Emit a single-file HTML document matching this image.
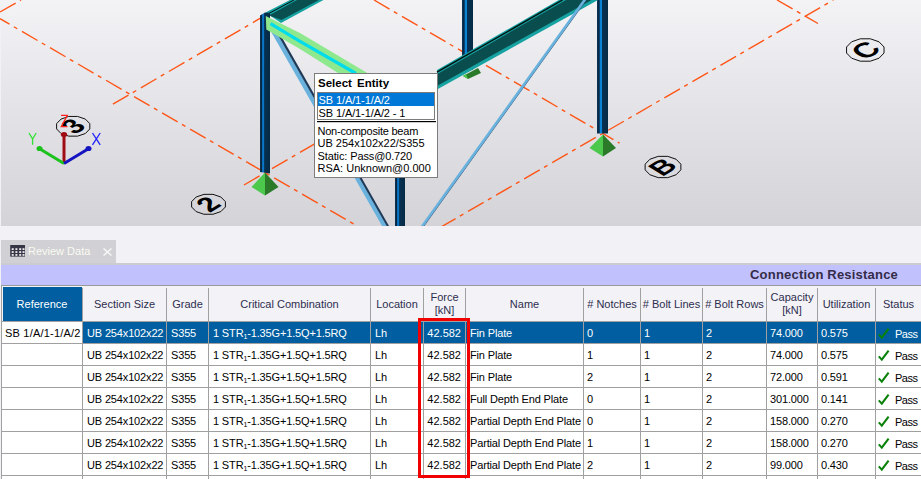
<!DOCTYPE html>
<html><head><meta charset="utf-8"><style>
*{margin:0;padding:0;box-sizing:border-box}
html,body{width:921px;height:479px;overflow:hidden;background:#f1f1f6;font-family:"Liberation Sans", sans-serif;}
.a{position:absolute}
.t{position:absolute;white-space:nowrap;font-size:11px;line-height:13px}
.hd{position:absolute;white-space:nowrap;font-size:11px;line-height:13px;color:#2e2e4e;text-align:center}
</style></head><body>
<div class="a" style="left:1px;top:0;width:920px;height:226px;background:linear-gradient(#f3f3f6,#d3d3d8)"></div><svg class="a" style="left:0;top:0" width="921" height="226" viewBox="0 0 921 226"><defs><linearGradient id="colA" x1="0" x2="1" y1="0" y2="0"><stop offset="0" stop-color="#0e3658"/><stop offset="0.16" stop-color="#06243f"/><stop offset="0.24" stop-color="#0a6cb8"/><stop offset="0.36" stop-color="#0a78c6"/><stop offset="0.46" stop-color="#073152"/><stop offset="1" stop-color="#052a44"/></linearGradient><linearGradient id="colB" x1="0" x2="1" y1="0" y2="0"><stop offset="0" stop-color="#0e3658"/><stop offset="0.2" stop-color="#06243f"/><stop offset="0.28" stop-color="#0a80d0"/><stop offset="0.42" stop-color="#0a84d4"/><stop offset="0.5" stop-color="#073152"/><stop offset="1" stop-color="#052a44"/></linearGradient></defs><g stroke="#ff5516" stroke-width="1.4" stroke-dasharray="18 5 4 5.4" fill="none"><line x1="0" y1="18.7" x2="357" y2="226" stroke-dashoffset="7"/><line x1="112.9" y1="104.1" x2="291.6" y2="0"/><line x1="0" y1="12" x2="21" y2="0"/><line x1="244" y1="185" x2="316" y2="143"/><line x1="374" y1="0" x2="619.5" y2="143.2"/><line x1="440" y1="227.6" x2="833.4" y2="0"/><line x1="777" y1="0" x2="818" y2="23.5"/></g><polygon points="265.5,12.5 290,0 323.5,0 281,23" fill="#17a2a2"/><polygon points="269,15.5 297,0 319,0 281.5,20" fill="#0a4f50"/><line x1="267.5" y1="14.2" x2="294" y2="0" stroke="#041010" stroke-width="1"/><rect x="462" y="0" width="11" height="70" fill="url(#colB)"/><rect x="597" y="0" width="11" height="133.5" fill="url(#colB)"/><polygon points="463,76 478,68 481,73 468,79" fill="#2a7a2a"/><polygon points="463,76 466,74 468,79" fill="#4cc94c"/><polygon points="437,70 558.8,0 598,0 437,89.5" fill="#17a2a2"/><polygon points="437,74.2 566,0 591.5,0 437,86" fill="#0a4d4e"/><line x1="437" y1="72.2" x2="562.5" y2="0" stroke="#041010" stroke-width="1.4"/><line x1="588.3" y1="-4" x2="420.3" y2="230" stroke="#2a4a6c" stroke-width="2"/><line x1="587.5" y1="-4" x2="419.5" y2="230" stroke="#6ab2de" stroke-width="2.6"/><rect x="395" y="150" width="10" height="80" fill="url(#colA)"/><polygon points="264.4,20 269.6,20 386.9,226 382.1,226" fill="#6ab2de"/><polygon points="269.4,20 272,20 389,226 386.7,226" fill="#1e3a58"/><polygon points="260,15.5 265,12.5 270,13 270,173.5 260,172" fill="url(#colA)"/><polygon points="265.8,16 300,33 368.2,73.5 338.8,73.5 300,49 266.3,29.6" fill="#8ee88e"/><polyline points="270.5,23.6 300,41.3 356,73.5" fill="none" stroke="#00dcec" stroke-width="3.2"/><polygon points="265,172.5 251.5,187 265,195.5" fill="#4cc94c"/><polygon points="265,172.5 278.5,187 265,195.5" fill="#2a7a2a"/><polygon points="603,134.5 589.5,148 603,156.5" fill="#4cc94c"/><polygon points="603,134.5 616,148 603,156.5" fill="#2a7a2a"/><polygon points="89.81,128.94 85.36,133.51 77.65,136.15 68.75,136.15 61.04,133.51 56.59,128.94 56.59,123.66 61.04,119.09 68.75,116.45 77.65,116.45 85.36,119.09 89.81,123.66" fill="none" stroke="#111" stroke-width="1"/><text transform="matrix(1.0,-0.62,1.0,0.62,73.2,126.3)" font-family="Liberation Sans" font-weight="bold" font-size="23" text-anchor="middle" dominant-baseline="central" fill="#000">3</text><polygon points="225.40,206.97 220.87,211.58 213.03,214.25 203.97,214.25 196.13,211.58 191.60,206.97 191.60,201.63 196.13,197.02 203.97,194.35 213.03,194.35 220.87,197.02 225.40,201.63" fill="none" stroke="#111" stroke-width="1"/><text transform="matrix(1.0,-0.62,1.0,0.62,208.5,204.3)" font-family="Liberation Sans" font-weight="bold" font-size="23" text-anchor="middle" dominant-baseline="central" fill="#000">2</text><polygon points="680.87,169.85 676.08,174.78 667.79,177.63 658.21,177.63 649.92,174.78 645.13,169.85 645.13,164.15 649.92,159.22 658.21,156.37 667.79,156.37 676.08,159.22 680.87,164.15" fill="none" stroke="#111" stroke-width="1"/><text transform="matrix(1.0,-0.62,1.0,0.62,663,167)" font-family="Liberation Sans" font-weight="bold" font-size="23" text-anchor="middle" dominant-baseline="central" fill="#000">B</text><polygon points="884.04,53.00 879.02,58.20 870.32,61.20 860.28,61.20 851.58,58.20 846.56,53.00 846.56,47.00 851.58,41.80 860.28,38.80 870.32,38.80 879.02,41.80 884.04,47.00" fill="none" stroke="#111" stroke-width="1"/><text transform="matrix(1.0,-0.62,1.0,0.62,865.3,50)" font-family="Liberation Sans" font-weight="bold" font-size="24" text-anchor="middle" dominant-baseline="central" fill="#000">C</text><g stroke-width="3" stroke-linecap="butt"><line x1="64" y1="163.5" x2="64" y2="135" stroke="#a00c14"/><line x1="64" y1="163.5" x2="40" y2="149" stroke="#1cc21c"/><line x1="64" y1="163.5" x2="88" y2="149" stroke="#1414c0"/></g><ellipse cx="64" cy="134.5" rx="3.2" ry="2.5" fill="#a00c14"/><ellipse cx="39.5" cy="148.5" rx="3" ry="2.6" fill="#1cc21c"/><ellipse cx="88.5" cy="148.5" rx="3" ry="2.6" fill="#1414c0"/><path d="M61,115.3 H67.3 L61.3,126.6 H67.5" fill="none" stroke="#ff2020" stroke-width="1.3"/><path d="M29,133 L32.6,139 L36.2,133 M32.6,139 V144.8" fill="none" stroke="#30e030" stroke-width="1.3"/><path d="M92.5,133 L100.2,144.8 M100.2,133 L92.5,144.8" fill="none" stroke="#2020ff" stroke-width="1.3"/><rect x="314.5" y="73.5" width="123" height="104" fill="#fff" stroke="#7c7c7c" stroke-width="1"/><text x="318" y="86.5" font-family="Liberation Sans" font-weight="bold" font-size="11.5" word-spacing="2" fill="#000">Select Entity</text><rect x="317.5" y="92.5" width="117" height="27" fill="#fff" stroke="#7c7c7c" stroke-width="1"/><rect x="318" y="93" width="116" height="13" fill="#0078d7"/><text x="318.5" y="103.5" font-family="Liberation Sans" font-size="11" letter-spacing="-0.1" fill="#fff">SB 1/A/1-1/A/2</text><text x="318.5" y="116.5" font-family="Liberation Sans" font-size="11" letter-spacing="-0.1" fill="#000">SB 1/A/1-1/A/2 - 1</text><rect x="317" y="121" width="119" height="1.2" fill="#000"/><text x="317.5" y="134.5" font-family="Liberation Sans" font-size="11" letter-spacing="-0.22" fill="#000">Non-composite beam</text><text x="317.5" y="147" font-family="Liberation Sans" font-size="11" letter-spacing="0" fill="#000">UB 254x102x22/S355</text><text x="317.5" y="159.6" font-family="Liberation Sans" font-size="11" letter-spacing="-0.12" fill="#000">Static: Pass@0.720</text><text x="317.5" y="172.4" font-family="Liberation Sans" font-size="11" letter-spacing="0" fill="#000">RSA: Unknown@0.000</text></svg><div class="a" style="left:1px;top:240px;width:115px;height:23px;background:#d0d0d5"></div><div class="a" style="left:1px;top:263px;width:920px;height:2px;background:#cbcbd0"></div><svg class="a" style="left:10px;top:245px" width="15" height="12" viewBox="0 0 15 12"><rect x="0.2" y="0" width="14.8" height="11.6" fill="#363646"/><rect x="1.7" y="3.25" width="2" height="1.7" fill="#f6f6f6"/><rect x="5.4" y="3.25" width="2" height="1.7" fill="#f6f6f6"/><rect x="9.2" y="3.25" width="2" height="1.7" fill="#f6f6f6"/><rect x="12.5" y="3.25" width="2" height="1.7" fill="#f6f6f6"/><rect x="1.7" y="6.2" width="2" height="1.7" fill="#f6f6f6"/><rect x="5.4" y="6.2" width="2" height="1.7" fill="#f6f6f6"/><rect x="9.2" y="6.2" width="2" height="1.7" fill="#f6f6f6"/><rect x="12.5" y="6.2" width="2" height="1.7" fill="#f6f6f6"/><rect x="1.7" y="9.1" width="2" height="1.7" fill="#f6f6f6"/><rect x="5.4" y="9.1" width="2" height="1.7" fill="#f6f6f6"/><rect x="9.2" y="9.1" width="2" height="1.7" fill="#f6f6f6"/><rect x="12.5" y="9.1" width="2" height="1.7" fill="#f6f6f6"/></svg><div class="t" style="left:28px;top:245px;color:#fafaf0;font-size:11px">Review Data</div><svg class="a" style="left:103px;top:248px" width="9" height="8" viewBox="0 0 9 8"><path d="M0.5 0.5L8.5 7.5M8.5 0.5L0.5 7.5" stroke="#f8f8f8" stroke-width="1.4"/></svg><div class="a" style="left:1px;top:265px;width:920px;height:20px;background:#c1c1fd"></div><div class="a" style="left:1px;top:285px;width:920px;height:1px;background:#9a9a98"></div><div class="t" style="right:23px;top:267px;font-weight:bold;font-size:13px;line-height:15px;color:#342c48;letter-spacing:0.2px">Connection Resistance</div><div class="a" style="left:1px;top:286px;width:1px;height:193px;background:#a0a0a0"></div><div class="a" style="left:2px;top:286px;width:919px;height:35px;background:#f2f2f7"></div><div class="a" style="left:3px;top:287px;width:79px;height:34px;background:#005ea1"></div><div class="a" style="left:2px;top:321px;width:919px;height:1px;background:#a0a0a0"></div><div class="a" style="left:82px;top:288px;width:1px;height:33px;background:#a0a0a0"></div><div class="a" style="left:166px;top:288px;width:1px;height:33px;background:#a0a0a0"></div><div class="a" style="left:208px;top:288px;width:1px;height:33px;background:#a0a0a0"></div><div class="a" style="left:370px;top:288px;width:1px;height:33px;background:#a0a0a0"></div><div class="a" style="left:423px;top:288px;width:1px;height:33px;background:#a0a0a0"></div><div class="a" style="left:465px;top:288px;width:1px;height:33px;background:#a0a0a0"></div><div class="a" style="left:583px;top:288px;width:1px;height:33px;background:#a0a0a0"></div><div class="a" style="left:640px;top:288px;width:1px;height:33px;background:#a0a0a0"></div><div class="a" style="left:702px;top:288px;width:1px;height:33px;background:#a0a0a0"></div><div class="a" style="left:766px;top:288px;width:1px;height:33px;background:#a0a0a0"></div><div class="a" style="left:817px;top:288px;width:1px;height:33px;background:#a0a0a0"></div><div class="a" style="left:875px;top:288px;width:1px;height:33px;background:#a0a0a0"></div><div class="hd" style="left:2px;top:298px;width:80px;color:#ffffff">Reference</div><div class="hd" style="left:83px;top:298px;width:83px;color:#2e2e4e">Section Size</div><div class="hd" style="left:167px;top:298px;width:41px;color:#2e2e4e">Grade</div><div class="hd" style="left:209px;top:298px;width:161px;color:#2e2e4e">Critical Combination</div><div class="hd" style="left:371px;top:298px;width:52px;color:#2e2e4e">Location</div><div class="hd" style="left:424px;top:291px;width:41px;color:#2e2e4e">Force<br>[kN]</div><div class="hd" style="left:466px;top:298px;width:117px;color:#2e2e4e">Name</div><div class="hd" style="left:584px;top:298px;width:56px;color:#2e2e4e"># Notches</div><div class="hd" style="left:641px;top:298px;width:61px;color:#2e2e4e"># Bolt Lines</div><div class="hd" style="left:703px;top:298px;width:63px;color:#2e2e4e"># Bolt Rows</div><div class="hd" style="left:767px;top:291px;width:50px;color:#2e2e4e">Capacity<br>[kN]</div><div class="hd" style="left:818px;top:298px;width:57px;color:#2e2e4e">Utilization</div><div class="hd" style="left:876px;top:298px;width:45px;color:#2e2e4e">Status</div><div class="a" style="left:2px;top:322px;width:80px;height:21px;background:#fff"></div><div class="a" style="left:83px;top:322px;width:838px;height:21px;background:#005ea1"></div><div class="a" style="left:2px;top:343px;width:919px;height:1px;background:#a0a0a0"></div><div class="a" style="left:2px;top:344px;width:919px;height:21px;background:#fff"></div><div class="a" style="left:2px;top:365px;width:919px;height:1px;background:#a0a0a0"></div><div class="a" style="left:2px;top:366px;width:919px;height:21px;background:#fff"></div><div class="a" style="left:2px;top:387px;width:919px;height:1px;background:#a0a0a0"></div><div class="a" style="left:2px;top:388px;width:919px;height:21px;background:#fff"></div><div class="a" style="left:2px;top:409px;width:919px;height:1px;background:#a0a0a0"></div><div class="a" style="left:2px;top:410px;width:919px;height:21px;background:#fff"></div><div class="a" style="left:2px;top:431px;width:919px;height:1px;background:#a0a0a0"></div><div class="a" style="left:2px;top:432px;width:919px;height:21px;background:#fff"></div><div class="a" style="left:2px;top:453px;width:919px;height:1px;background:#a0a0a0"></div><div class="a" style="left:2px;top:454px;width:919px;height:21px;background:#fff"></div><div class="a" style="left:2px;top:475px;width:919px;height:1px;background:#a0a0a0"></div><div class="a" style="left:2px;top:476px;width:919px;height:21px;background:#fff"></div><div class="a" style="left:2px;top:497px;width:919px;height:1px;background:#a0a0a0"></div><div class="a" style="left:82px;top:322px;width:1px;height:157px;background:#a0a0a0"></div><div class="a" style="left:166px;top:322px;width:1px;height:157px;background:#a0a0a0"></div><div class="a" style="left:208px;top:322px;width:1px;height:157px;background:#a0a0a0"></div><div class="a" style="left:370px;top:322px;width:1px;height:157px;background:#a0a0a0"></div><div class="a" style="left:423px;top:322px;width:1px;height:157px;background:#a0a0a0"></div><div class="a" style="left:465px;top:322px;width:1px;height:157px;background:#a0a0a0"></div><div class="a" style="left:583px;top:322px;width:1px;height:157px;background:#a0a0a0"></div><div class="a" style="left:640px;top:322px;width:1px;height:157px;background:#a0a0a0"></div><div class="a" style="left:702px;top:322px;width:1px;height:157px;background:#a0a0a0"></div><div class="a" style="left:766px;top:322px;width:1px;height:157px;background:#a0a0a0"></div><div class="a" style="left:817px;top:322px;width:1px;height:157px;background:#a0a0a0"></div><div class="a" style="left:875px;top:322px;width:1px;height:157px;background:#a0a0a0"></div><div class="t" style="left:5px;top:327px;color:#000;letter-spacing:0.2px">SB 1/A/1-1/A/2</div><div class="t" style="left:87px;top:327px;color:#ffffff;letter-spacing:-0.15px">UB 254x102x22</div><div class="t" style="left:171px;top:327px;color:#ffffff;letter-spacing:-0.15px">S355</div><div class="t" style="left:213px;top:327px;color:#ffffff;letter-spacing:-0.15px">1 STR<span style="font-size:7px;vertical-align:-2px">1</span>-1.35G+1.5Q+1.5RQ</div><div class="t" style="left:375px;top:327px;color:#ffffff;letter-spacing:-0.15px">Lh</div><div class="t" style="left:424px;width:37px;text-align:right;top:327px;color:#ffffff">42.582</div><div class="t" style="left:470px;top:327px;color:#ffffff;letter-spacing:-0.15px">Fin Plate</div><div class="t" style="left:587px;top:327px;color:#ffffff;letter-spacing:-0.15px">0</div><div class="t" style="left:644px;top:327px;color:#ffffff;letter-spacing:-0.15px">1</div><div class="t" style="left:706px;top:327px;color:#ffffff;letter-spacing:-0.15px">2</div><div class="t" style="left:770px;top:327px;color:#ffffff;letter-spacing:-0.15px">74.000</div><div class="t" style="left:821px;top:327px;color:#ffffff;letter-spacing:-0.15px">0.575</div><svg class="a" style="left:878px;top:326px" width="14" height="14" viewBox="0 0 14 14"><path d="M0.8 8.4 L3.8 11.6 L10.6 2.6" fill="none" stroke="#0a820a" stroke-width="2.1"/></svg><div class="t" style="left:895px;top:328px;color:#ffffff;letter-spacing:-0.5px">Pass</div><div class="t" style="left:87px;top:349px;color:#000000;letter-spacing:-0.15px">UB 254x102x22</div><div class="t" style="left:171px;top:349px;color:#000000;letter-spacing:-0.15px">S355</div><div class="t" style="left:213px;top:349px;color:#000000;letter-spacing:-0.15px">1 STR<span style="font-size:7px;vertical-align:-2px">1</span>-1.35G+1.5Q+1.5RQ</div><div class="t" style="left:375px;top:349px;color:#000000;letter-spacing:-0.15px">Lh</div><div class="t" style="left:424px;width:37px;text-align:right;top:349px;color:#000000">42.582</div><div class="t" style="left:470px;top:349px;color:#000000;letter-spacing:-0.15px">Fin Plate</div><div class="t" style="left:587px;top:349px;color:#000000;letter-spacing:-0.15px">1</div><div class="t" style="left:644px;top:349px;color:#000000;letter-spacing:-0.15px">1</div><div class="t" style="left:706px;top:349px;color:#000000;letter-spacing:-0.15px">2</div><div class="t" style="left:770px;top:349px;color:#000000;letter-spacing:-0.15px">74.000</div><div class="t" style="left:821px;top:349px;color:#000000;letter-spacing:-0.15px">0.575</div><svg class="a" style="left:878px;top:348px" width="14" height="14" viewBox="0 0 14 14"><path d="M0.8 8.4 L3.8 11.6 L10.6 2.6" fill="none" stroke="#0a820a" stroke-width="2.1"/></svg><div class="t" style="left:895px;top:350px;color:#000000;letter-spacing:-0.5px">Pass</div><div class="t" style="left:87px;top:371px;color:#000000;letter-spacing:-0.15px">UB 254x102x22</div><div class="t" style="left:171px;top:371px;color:#000000;letter-spacing:-0.15px">S355</div><div class="t" style="left:213px;top:371px;color:#000000;letter-spacing:-0.15px">1 STR<span style="font-size:7px;vertical-align:-2px">1</span>-1.35G+1.5Q+1.5RQ</div><div class="t" style="left:375px;top:371px;color:#000000;letter-spacing:-0.15px">Lh</div><div class="t" style="left:424px;width:37px;text-align:right;top:371px;color:#000000">42.582</div><div class="t" style="left:470px;top:371px;color:#000000;letter-spacing:-0.15px">Fin Plate</div><div class="t" style="left:587px;top:371px;color:#000000;letter-spacing:-0.15px">2</div><div class="t" style="left:644px;top:371px;color:#000000;letter-spacing:-0.15px">1</div><div class="t" style="left:706px;top:371px;color:#000000;letter-spacing:-0.15px">2</div><div class="t" style="left:770px;top:371px;color:#000000;letter-spacing:-0.15px">72.000</div><div class="t" style="left:821px;top:371px;color:#000000;letter-spacing:-0.15px">0.591</div><svg class="a" style="left:878px;top:370px" width="14" height="14" viewBox="0 0 14 14"><path d="M0.8 8.4 L3.8 11.6 L10.6 2.6" fill="none" stroke="#0a820a" stroke-width="2.1"/></svg><div class="t" style="left:895px;top:372px;color:#000000;letter-spacing:-0.5px">Pass</div><div class="t" style="left:87px;top:393px;color:#000000;letter-spacing:-0.15px">UB 254x102x22</div><div class="t" style="left:171px;top:393px;color:#000000;letter-spacing:-0.15px">S355</div><div class="t" style="left:213px;top:393px;color:#000000;letter-spacing:-0.15px">1 STR<span style="font-size:7px;vertical-align:-2px">1</span>-1.35G+1.5Q+1.5RQ</div><div class="t" style="left:375px;top:393px;color:#000000;letter-spacing:-0.15px">Lh</div><div class="t" style="left:424px;width:37px;text-align:right;top:393px;color:#000000">42.582</div><div class="t" style="left:470px;top:393px;color:#000000;letter-spacing:-0.15px">Full Depth End Plate</div><div class="t" style="left:587px;top:393px;color:#000000;letter-spacing:-0.15px">0</div><div class="t" style="left:644px;top:393px;color:#000000;letter-spacing:-0.15px">1</div><div class="t" style="left:706px;top:393px;color:#000000;letter-spacing:-0.15px">2</div><div class="t" style="left:770px;top:393px;color:#000000;letter-spacing:-0.15px">301.000</div><div class="t" style="left:821px;top:393px;color:#000000;letter-spacing:-0.15px">0.141</div><svg class="a" style="left:878px;top:392px" width="14" height="14" viewBox="0 0 14 14"><path d="M0.8 8.4 L3.8 11.6 L10.6 2.6" fill="none" stroke="#0a820a" stroke-width="2.1"/></svg><div class="t" style="left:895px;top:394px;color:#000000;letter-spacing:-0.5px">Pass</div><div class="t" style="left:87px;top:415px;color:#000000;letter-spacing:-0.15px">UB 254x102x22</div><div class="t" style="left:171px;top:415px;color:#000000;letter-spacing:-0.15px">S355</div><div class="t" style="left:213px;top:415px;color:#000000;letter-spacing:-0.15px">1 STR<span style="font-size:7px;vertical-align:-2px">1</span>-1.35G+1.5Q+1.5RQ</div><div class="t" style="left:375px;top:415px;color:#000000;letter-spacing:-0.15px">Lh</div><div class="t" style="left:424px;width:37px;text-align:right;top:415px;color:#000000">42.582</div><div class="t" style="left:470px;top:415px;color:#000000;letter-spacing:-0.15px">Partial Depth End Plate</div><div class="t" style="left:587px;top:415px;color:#000000;letter-spacing:-0.15px">0</div><div class="t" style="left:644px;top:415px;color:#000000;letter-spacing:-0.15px">1</div><div class="t" style="left:706px;top:415px;color:#000000;letter-spacing:-0.15px">2</div><div class="t" style="left:770px;top:415px;color:#000000;letter-spacing:-0.15px">158.000</div><div class="t" style="left:821px;top:415px;color:#000000;letter-spacing:-0.15px">0.270</div><svg class="a" style="left:878px;top:414px" width="14" height="14" viewBox="0 0 14 14"><path d="M0.8 8.4 L3.8 11.6 L10.6 2.6" fill="none" stroke="#0a820a" stroke-width="2.1"/></svg><div class="t" style="left:895px;top:416px;color:#000000;letter-spacing:-0.5px">Pass</div><div class="t" style="left:87px;top:437px;color:#000000;letter-spacing:-0.15px">UB 254x102x22</div><div class="t" style="left:171px;top:437px;color:#000000;letter-spacing:-0.15px">S355</div><div class="t" style="left:213px;top:437px;color:#000000;letter-spacing:-0.15px">1 STR<span style="font-size:7px;vertical-align:-2px">1</span>-1.35G+1.5Q+1.5RQ</div><div class="t" style="left:375px;top:437px;color:#000000;letter-spacing:-0.15px">Lh</div><div class="t" style="left:424px;width:37px;text-align:right;top:437px;color:#000000">42.582</div><div class="t" style="left:470px;top:437px;color:#000000;letter-spacing:-0.15px">Partial Depth End Plate</div><div class="t" style="left:587px;top:437px;color:#000000;letter-spacing:-0.15px">1</div><div class="t" style="left:644px;top:437px;color:#000000;letter-spacing:-0.15px">1</div><div class="t" style="left:706px;top:437px;color:#000000;letter-spacing:-0.15px">2</div><div class="t" style="left:770px;top:437px;color:#000000;letter-spacing:-0.15px">158.000</div><div class="t" style="left:821px;top:437px;color:#000000;letter-spacing:-0.15px">0.270</div><svg class="a" style="left:878px;top:436px" width="14" height="14" viewBox="0 0 14 14"><path d="M0.8 8.4 L3.8 11.6 L10.6 2.6" fill="none" stroke="#0a820a" stroke-width="2.1"/></svg><div class="t" style="left:895px;top:438px;color:#000000;letter-spacing:-0.5px">Pass</div><div class="t" style="left:87px;top:459px;color:#000000;letter-spacing:-0.15px">UB 254x102x22</div><div class="t" style="left:171px;top:459px;color:#000000;letter-spacing:-0.15px">S355</div><div class="t" style="left:213px;top:459px;color:#000000;letter-spacing:-0.15px">1 STR<span style="font-size:7px;vertical-align:-2px">1</span>-1.35G+1.5Q+1.5RQ</div><div class="t" style="left:375px;top:459px;color:#000000;letter-spacing:-0.15px">Lh</div><div class="t" style="left:424px;width:37px;text-align:right;top:459px;color:#000000">42.582</div><div class="t" style="left:470px;top:459px;color:#000000;letter-spacing:-0.15px">Partial Depth End Plate</div><div class="t" style="left:587px;top:459px;color:#000000;letter-spacing:-0.15px">2</div><div class="t" style="left:644px;top:459px;color:#000000;letter-spacing:-0.15px">1</div><div class="t" style="left:706px;top:459px;color:#000000;letter-spacing:-0.15px">2</div><div class="t" style="left:770px;top:459px;color:#000000;letter-spacing:-0.15px">99.000</div><div class="t" style="left:821px;top:459px;color:#000000;letter-spacing:-0.15px">0.430</div><svg class="a" style="left:878px;top:458px" width="14" height="14" viewBox="0 0 14 14"><path d="M0.8 8.4 L3.8 11.6 L10.6 2.6" fill="none" stroke="#0a820a" stroke-width="2.1"/></svg><div class="t" style="left:895px;top:460px;color:#000000;letter-spacing:-0.5px">Pass</div><div class="a" style="left:418px;top:318px;width:52px;height:160px;border:3px solid #f00000"></div>
</body></html>
